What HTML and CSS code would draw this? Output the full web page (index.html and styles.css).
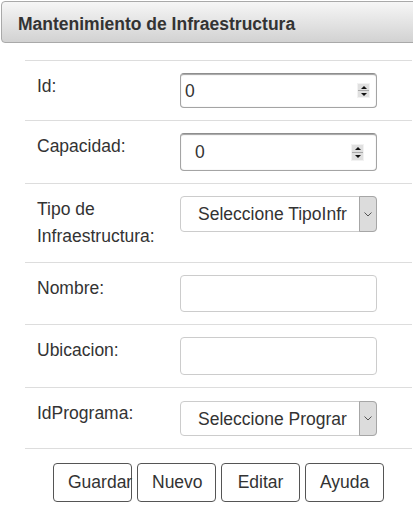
FILE: index.html
```html
<!DOCTYPE html>
<html lang="es">
<head>
<meta charset="utf-8">
<title>Mantenimiento de Infraestructura</title>
<link rel="stylesheet" href="styles.css">
</head>
<body>
<div class="page">
  <div class="panel-heading">Mantenimiento de Infraestructura</div>
  <div class="form">
    <div class="row">
      <div class="lbl">Id:</div>
      <div class="fld">
        <div class="num num-id"><span class="val">0</span><span class="spin"><span class="half"><i class="up"></i></span><span class="half"><i class="down"></i></span></span></div>
      </div>
    </div>
    <div class="row">
      <div class="lbl">Capacidad:</div>
      <div class="fld">
        <div class="num num-cap"><span class="val">0</span><span class="spin"><span class="half"><i class="up"></i></span><span class="half"><i class="down"></i></span></span></div>
      </div>
    </div>
    <div class="row">
      <div class="lbl">Tipo de<br>Infraestructura:</div>
      <div class="fld">
        <div class="sel sel-tipo"><span class="txt">Seleccione TipoInfr</span><span class="arr"><svg width="8" height="5" viewBox="0 0 8 5"><polyline points="0.5,0.5 4,4 7.5,0.5" fill="none" stroke="#555" stroke-width="1"/></svg></span></div>
      </div>
    </div>
    <div class="row">
      <div class="lbl">Nombre:</div>
      <div class="fld"><div class="txtin"></div></div>
    </div>
    <div class="row">
      <div class="lbl">Ubicacion:</div>
      <div class="fld"><div class="txtin txtin-ubi"></div></div>
    </div>
    <div class="row">
      <div class="lbl">IdPrograma:</div>
      <div class="fld">
        <div class="sel sel-prog"><span class="txt">Seleccione Prograr</span><span class="arr"><svg width="8" height="5" viewBox="0 0 8 5"><polyline points="0.5,0.5 4,4 7.5,0.5" fill="none" stroke="#555" stroke-width="1"/></svg></span></div>
      </div>
    </div>
    <div class="actions">
      <button class="btn"><span>Guardar</span></button>
      <button class="btn"><span>Nuevo</span></button>
      <button class="btn"><span>Editar</span></button>
      <button class="btn"><span>Ayuda</span></button>
    </div>
  </div>
</div>
</body>
</html>
```
FILE: styles.css
```css
html, body {
  margin: 0;
  padding: 0;
  overflow: hidden;
  background: #fff;
}
body {
  font-family: "Liberation Sans", Arial, sans-serif;
  font-size: 17.5px;
  color: #333;
}
.page {
  padding: 1px 0 0 1px;
}
.panel-heading {
  box-sizing: content-box;
  padding: 4px 0 0 16px;
  height: 36px;
  line-height: 36px;
  margin-right: -30px;
  border: 1px solid #a9a9a9;
  border-radius: 4px 0 0 4px;
  background: linear-gradient(#f6f6f6, #d2d2d2);
  font-weight: bold;
  color: #333;
}
.form {
  margin: 17px 0 0 24px;
  width: 387px;
}
.row {
  display: grid;
  grid-template-columns: 143px 1fr;
  border-top: 1px solid #ddd;
}
.lbl {
  padding: 12px;
  line-height: 27px;
  white-space: nowrap;
}
.fld {
  padding: 12px;
}
.num {
  display: flex;
  align-items: center;
  width: 197px;
  height: 35px;
  box-sizing: border-box;
  border: 1px solid #a4a4a4;
  border-top-color: #8e8e8e;
  border-radius: 4px;
  box-shadow: inset 0 2px 1px -1px rgba(0, 0, 0, 0.35), inset 0 0 1px rgba(0, 0, 0, 0.25);
  padding-left: 4px;
  background: #fff;
}
.num-cap {
  height: 38px;
  padding-left: 14px;
}
.val {
  line-height: 20px;
}
.spin {
  margin-left: auto;
  margin-right: 6px;
  display: flex;
  flex-direction: column;
  width: 13px;
  height: 15px;
  box-sizing: border-box;
  border: 1px solid #f2f2f2;
  background: #e0e0e0;
}
.num-cap .spin {
  margin-right: 12px;
  height: 17px;
}
.half {
  flex: 1;
  display: flex;
  align-items: center;
  justify-content: center;
}
.half + .half {
  border-top: 1px solid #a8a8a8;
}
.up {
  width: 0;
  height: 0;
  border-left: 3px solid transparent;
  border-right: 3px solid transparent;
  border-bottom: 3px solid #111;
}
.down {
  width: 0;
  height: 0;
  border-left: 3px solid transparent;
  border-right: 3px solid transparent;
  border-top: 3px solid #111;
}
.sel {
  display: flex;
  width: 197px;
  height: 36px;
  box-sizing: border-box;
  border: 1px solid #ccc;
  border-radius: 4px;
  background: #fff;
}
.sel-prog {
  margin-top: 1px;
  height: 35px;
}
.sel .txt {
  align-self: center;
  margin-left: 17px;
  white-space: nowrap;
  line-height: 20px;
}
.sel .arr {
  margin: -1px -1px -1px auto;
  width: 18px;
  box-sizing: border-box;
  border: 1px solid #a6a6a6;
  border-radius: 0 4px 4px 0;
  background: #dcdcdc;
  display: flex;
  align-items: center;
  justify-content: center;
}
.sel .arr svg {
  display: block;
}
.txtin {
  width: 197px;
  height: 37px;
  box-sizing: border-box;
  border: 1px solid #ccc;
  border-radius: 4px;
  background: #fff;
}
.txtin-ubi {
  height: 38px;
}
.actions {
  display: flex;
  justify-content: center;
  gap: 5px;
  border-top: 1px solid #ddd;
  padding: 14px 0 12px;
}
.btn {
  width: 79px;
  height: 39px;
  box-sizing: border-box;
  padding: 0 14px;
  border: 1px solid #555;
  border-radius: 4px;
  background: #fff;
  font-family: "Liberation Sans", Arial, sans-serif;
  font-size: 17.5px;
  color: #333;
  white-space: nowrap;
}
.btn span {
  display: block;
  text-align: center;
}
```
